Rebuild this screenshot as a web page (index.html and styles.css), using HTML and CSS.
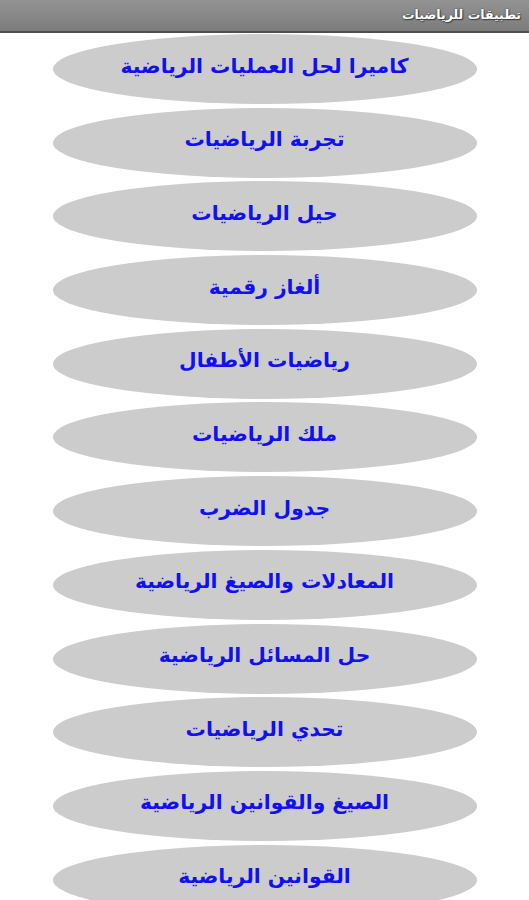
FILE: index.html
```html
<!DOCTYPE html>
<html lang="ar">
<head>
<meta charset="utf-8">
<title>تطبيقات للرياضيات</title>
<link rel="stylesheet" href="styles.css">
</head>
<body>
<header class="titlebar"><span class="title">تطبيقات للرياضيات</span></header>
<main class="list">
  <div class="item">كاميرا لحل العمليات الرياضية</div>
  <div class="item">تجربة الرياضيات</div>
  <div class="item">حيل الرياضيات</div>
  <div class="item">ألغاز رقمية</div>
  <div class="item">رياضيات الأطفال</div>
  <div class="item">ملك الرياضيات</div>
  <div class="item">جدول الضرب</div>
  <div class="item">المعادلات والصيغ الرياضية</div>
  <div class="item">حل المسائل الرياضية</div>
  <div class="item">تحدي الرياضيات</div>
  <div class="item">الصيغ والقوانين الرياضية</div>
  <div class="item">القوانين الرياضية</div>
</main>
</body>
</html>
```
FILE: styles.css
```css
html, body {
  margin: 0;
  padding: 0;
  background: #ffffff;
  height: 900px;
  overflow: hidden;
}
body {
  font-family: "DejaVu Sans", "Noto Sans", sans-serif;
  direction: rtl;
}
.titlebar {
  height: 29px;
  background: linear-gradient(#939393, #7c7c7c);
  border-bottom: 2px solid #4e4e4e;
  display: flex;
  align-items: center;
  padding: 0 8px 2px 0;
  box-sizing: content-box;
}
.title {
  color: #ffffff;
  font-weight: bold;
  font-size: 12.5px;
  text-shadow: 0 0 2px #333, 1px 1px 1px #444;
}
.list {
  display: flex;
  flex-direction: column;
  align-items: center;
  gap: 3.7px;
  padding-top: 1px;
}
.item {
  width: 424px;
  height: 70px;
  border-radius: 50%;
  background: #cccccc;
  color: #1010f2;
  font-weight: bold;
  font-size: 20.3px;
  display: flex;
  align-items: center;
  justify-content: center;
  padding-bottom: 7px;
  box-sizing: border-box;
}
```
